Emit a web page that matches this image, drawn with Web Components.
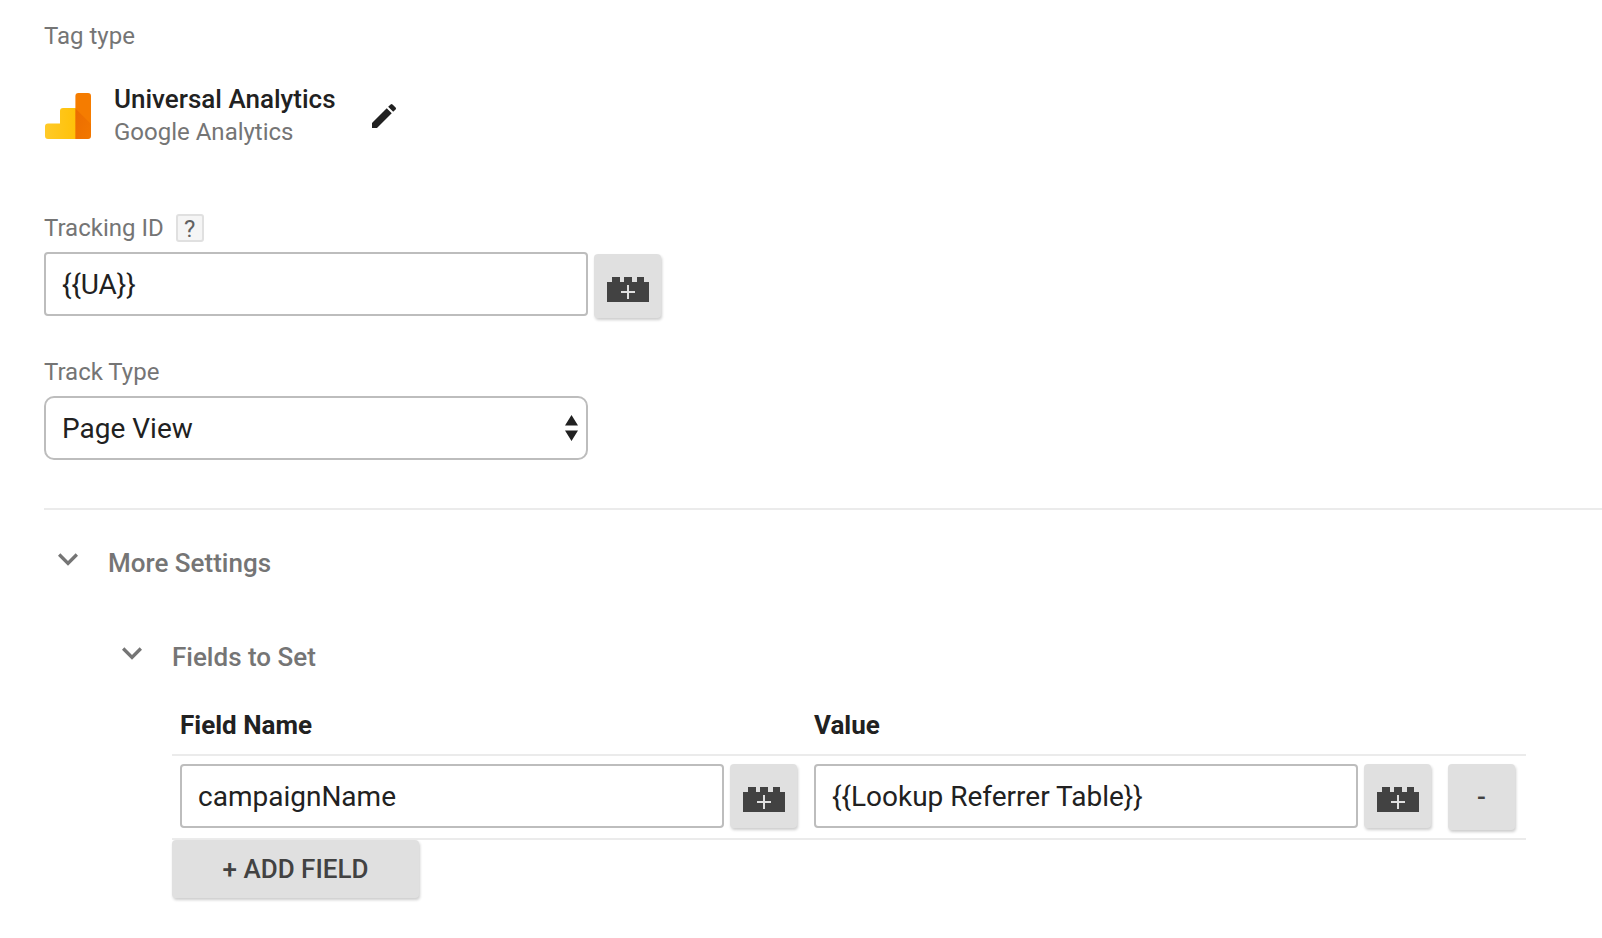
<!DOCTYPE html>
<html lang="en">
<head>
<meta charset="utf-8">
<meta name="viewport" content="width=device-width, initial-scale=1">
<title>Tag configuration</title>
<style>
  :root {
    --text: #212121;
    --muted: #757575;
    --line: #ebebeb;
    --edge: #bdbdbd;
    --button: #e0e0e0;
    --button-text: #424242;
  }
  body {
    margin: 0;
    background: #fff;
    color: var(--text);
    font-family: Roboto, "Liberation Sans", sans-serif;
  }
</style>
</head>
<body>
<tag-editor></tag-editor>

<script>
const define = (name, html, setup) => {
  const template = document.createElement('template');
  template.innerHTML = html;
  customElements.define(name, class extends HTMLElement {
    connectedCallback() {
      if (this.shadowRoot) return;
      const root = this.attachShadow({ mode: 'open' });
      root.append(template.content.cloneNode(true));
      if (setup) setup(this, root);
    }
  });
};

/* Raised grey button */
define('flat-button', `
  <style>
    :host { display: block; }
    button {
      box-sizing: border-box; width: 100%; height: 100%;
      display: flex; align-items: center; justify-content: center;
      margin: 0; padding: 0; border: 0; border-radius: 4px;
      background: var(--button); color: var(--button-text);
      font: 500 26px/30px Roboto, "Liberation Sans", sans-serif;
      box-shadow: 1px 2px 3px rgba(0, 0, 0, .2);
      cursor: pointer;
    }
  </style>
  <button type="button"><slot></slot></button>`,
  (host, root) => {
    const label = host.getAttribute('label');
    if (label) root.querySelector('button').setAttribute('aria-label', label);
  });

/* Button that inserts a variable */
define('variable-button', `
  <style>
    :host { display: block; flex: none; width: 67px; height: 64px; }
    flat-button { height: 100%; }
    svg { display: block; width: 43px; height: 32px; }
  </style>
  <flat-button label="Insert variable">
    <svg viewBox="-1 0 43 32" aria-hidden="true">
      <path fill="#424242" d="M0 12h5V7h8v5h4V7h8v5h5V7h7v5h5v20H0z"/>
      <path fill="none" stroke="#e0e0e0" stroke-width="2" d="M14 22h14M21 15v14"/>
    </svg>
  </flat-button>`);

/* Text box with its variable button */
define('variable-input', `
  <style>
    :host { display: block; }
    label { display: none; }
    .head { display: flex; align-items: center; gap: 12px; }
    :host([label]) .head { margin-bottom: 10px; }
    :host([label]) label { display: block; font-size: 24px; line-height: 28px; color: var(--muted); }
    .row { display: flex; gap: 6px; }
    :host([label]) variable-button { margin-top: 2px; }
    input {
      box-sizing: border-box; width: 544px; height: 64px; margin: 0; padding: 0 16px;
      border: 2px solid var(--edge); border-radius: 4px; background: #fff; color: var(--text);
      font: 400 28px/32px Roboto, "Liberation Sans", sans-serif;
    }
  </style>
  <div class="head"><label for="box"></label><slot></slot></div>
  <div class="row"><input id="box" type="text" spellcheck="false"><variable-button></variable-button></div>`,
  (host, root) => {
    const input = root.querySelector('input');
    input.value = host.getAttribute('value') || '';
    root.querySelector('label').textContent = host.getAttribute('label') || '';
    if (host.hasAttribute('name')) input.setAttribute('aria-label', host.getAttribute('name'));
  });

define('help-button', `
  <style>
    :host { display: block; }
    button {
      display: block; box-sizing: border-box; width: 28px; height: 28px; margin: 0; padding: 0;
      border: 2px solid #e0e0e0; border-radius: 3px; background: #f5f5f5; color: #616161;
      font: 400 24px/26px Roboto, "Liberation Sans", sans-serif;
    }
  </style>
  <button type="button">?</button>`);

define('select-field', `
  <style>
    :host { display: block; }
    label { display: block; margin-bottom: 10px; font-size: 24px; line-height: 28px; color: var(--muted); }
    .box { display: grid; width: 544px; align-items: center; }
    select, svg { grid-area: 1 / 1; }
    select {
      appearance: none; box-sizing: border-box; width: 100%; height: 64px; margin: 0; padding: 2px 16px 0;
      border: 2px solid var(--edge); border-radius: 10px; background: #fff; color: var(--text);
      font: 400 28px/32px Roboto, "Liberation Sans", sans-serif;
    }
    svg { justify-self: end; width: 13px; height: 26px; margin-right: 10px; pointer-events: none; }
  </style>
  <label for="pick">Track Type</label>
  <div class="box">
    <select id="pick"><option>Page View</option><option>Event</option><option>Transaction</option></select>
    <svg viewBox="0 0 13 26" fill="#212121" aria-hidden="true"><path d="M6.500 0l6.500 10.500H0zM6.500 26L0 15.500h13z"/></svg>
  </div>`);

/* Chosen tag type with its logo and an edit button */
define('tag-type', `
  <style>
    :host { display: block; color: var(--muted); font-size: 24px; }
    .label { line-height: 28px; margin-bottom: 33px; }
    .row { display: flex; align-items: center; }
    .logo { width: 46px; height: 46px; margin: 0 23px 0 1px; }
    .names { line-height: 32px; padding-bottom: 1px; }
    strong { display: block; padding-bottom: 1px; font-size: 26px; font-weight: 500; color: var(--text); }
    button { margin: 0 0 0 32px; padding: 0; border: 0; background: none; cursor: pointer; }
    button svg { display: block; width: 32px; height: 32px; }
  </style>
  <div class="label">Tag type</div>
  <div class="row">
    <svg class="logo" viewBox="0 0 46 46" aria-hidden="true">
      <defs>
        <linearGradient id="y" x1="0" x2="1"><stop offset="0" stop-color="#ffca28"/><stop offset="1" stop-color="#ffc107"/></linearGradient>
        <linearGradient id="s" x1="0" y1="0" x2="1" y2="1"><stop offset="0" stop-color="#d84f00" stop-opacity=".35"/><stop offset="1" stop-color="#d84f00" stop-opacity=".1"/></linearGradient>
      </defs>
      <path fill="url(#y)" d="M3 30.500h12V18a3 3 0 0 1 3-3h14v31H3a3 3 0 0 1-3-3v-9.500a3 3 0 0 1 3-3z"/>
      <path fill="#f57c00" d="M33.400 0H43a3 3 0 0 1 3 3v40a3 3 0 0 1-3 3H30.400V3a3 3 0 0 1 3-3z"/>
      <path fill="url(#s)" d="M30.400 15.400L46 31v12a3 3 0 0 1-3 3H30.400z"/>
    </svg>
    <div class="names"><strong>Universal Analytics</strong>Google Analytics</div>
    <button type="button" aria-label="Edit tag type">
      <svg viewBox="0 0 24 24" fill="#212121"><path d="M3 17.250V21h3.750L17.810 9.940l-3.750-3.750L3 17.250zM20.710 7.040a1 1 0 0 0 0-1.410l-2.340-2.340a1 1 0 0 0-1.410 0l-1.830 1.830 3.750 3.750 1.830-1.830z"/></svg>
    </button>
  </div>`);

/* Collapsible section: heading row, with its content in the slot */
define('fold-section', `
  <style>
    :host { display: block; }
    button {
      display: flex; align-items: flex-start; gap: 20px; margin: 0; padding: 0 0 0 4px;
      border: 0; background: none; color: var(--muted); cursor: pointer;
      font: 500 26px/50px Roboto, "Liberation Sans", sans-serif;
    }
    svg { width: 40px; height: 42px; }
    .body { padding-left: 64px; }
  </style>
  <button type="button" aria-expanded="true">
    <svg viewBox="0 0 24 24" fill="#757575" aria-hidden="true"><path d="M16.590 8.590L12 13.170 7.410 8.590 6 10l6 6 6-6z"/></svg>
    <span></span>
  </button>
  <div class="body"><slot></slot></div>`,
  (host, root) => { root.querySelector('span').textContent = host.getAttribute('heading'); });

define('fields-table', `
  <style>
    :host { display: block; }
    table { border-collapse: separate; border-spacing: 0; }
    th, td { text-align: left; vertical-align: top; border-bottom: 2px solid var(--line); }
    th { padding: 28px 8px 14px; font-size: 26px; line-height: 30px; font-weight: 700; }
    td { padding: 8px 9px 8px 8px; }
    td:last-child { padding-right: 11px; }
    .remove { width: 67px; height: 66px; }
    .add { width: 247px; height: 58px; }
  </style>
  <table>
    <thead><tr><th scope="col">Field Name</th><th scope="col">Value</th><th></th></tr></thead>
    <tbody><tr>
      <td><variable-input name="Field Name" value="campaignName"></variable-input></td>
      <td><variable-input name="Value" value="{{Lookup Referrer Table}}"></variable-input></td>
      <td><flat-button class="remove">-</flat-button></td>
    </tr></tbody>
  </table>
  <flat-button class="add">+ ADD FIELD</flat-button>`);

define('tag-editor', `
  <style>
    :host { display: block; padding: 22px 0 40px 44px; }
    variable-input { margin-top: 65px; }
    select-field { margin-top: 40px; }
    hr { height: 2px; margin: 48px 0 28px; border: 0; background: var(--line); }
    fold-section fold-section { margin-top: 44px; }
  </style>
  <tag-type></tag-type>
  <variable-input label="Tracking ID" value="{{UA}}"><help-button></help-button></variable-input>
  <select-field></select-field>
  <hr>
  <fold-section heading="More Settings">
    <fold-section heading="Fields to Set"><fields-table></fields-table></fold-section>
  </fold-section>`);
</script>
</body>
</html>
